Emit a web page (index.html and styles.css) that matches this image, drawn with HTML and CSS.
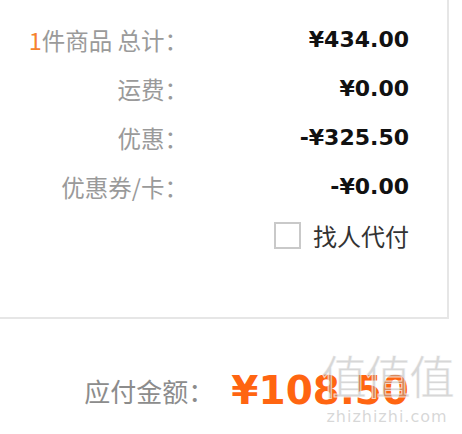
FILE: index.html
```html
<!DOCTYPE html>
<html lang="zh-CN">
<head>
    <meta charset="UTF-8">
    <meta name="viewport" content="width=device-width, initial-scale=1.0">
    <title>订单结算</title>
    <link rel="stylesheet" href="styles.css">
</head>
<body>
    <div class="summary">
        <div class="row">
            <span class="label"><em class="count">1</em>件商品 总计：</span>
            <span class="value">¥434.00</span>
        </div>
        <div class="row">
            <span class="label">运费：</span>
            <span class="value">¥0.00</span>
        </div>
        <div class="row">
            <span class="label">优惠：</span>
            <span class="value">-¥325.50</span>
        </div>
        <div class="row">
            <span class="label">优惠券/卡：</span>
            <span class="value">-¥0.00</span>
        </div>
        <div class="row row-pay">
            <label class="check">
                <span class="box"></span>
                <span class="check-text">找人代付</span>
            </label>
        </div>
    </div>

    <div class="total">
        <span class="total-label">应付金额：</span>
        <span class="total-value">¥108.50</span>
        <div class="watermark">
            <span class="wm-big">值值值</span>
            <span class="wm-small">zhizhizhi.com</span>
        </div>
    </div>
</body>
</html>
```

FILE: styles.css
```css
body {
    margin: 0;
    background-color: #fff;
    font-family: "Noto Sans CJK TC", "Noto Sans", sans-serif;
}

.summary {
    width: 447px;
    height: 302px;
    padding-top: 15px;
    border-right: 2px solid #e6e6e6;
    border-bottom: 2px solid #e6e6e6;
}

.row {
    display: flex;
    align-items: center;
    height: 49px;
    padding-right: 38px;
}

.label {
    width: 188px;
    text-align: right;
    font-size: 23.5px;
    color: #9a9a9a;
    white-space: nowrap;
}

.count {
    font-style: normal;
    color: #f5822e; /* оранжевая цифра */
}

.value {
    flex: 1;
    text-align: right;
    font-family: "DejaVu Sans", sans-serif;
    font-weight: bold;
    font-size: 22px;
    color: #111;
}

.row-pay {
    justify-content: flex-end;
}

.check {
    display: flex;
    align-items: center;
    gap: 12px;
}

.box {
    width: 23px;
    height: 23px;
    border: 2px solid #c9c9c9;
}

.check-text {
    font-size: 24px;
    color: #333;
}

.total {
    position: relative;
    display: flex;
    align-items: center;
    justify-content: flex-end;
    height: 88px;
    padding-top: 27px;
    padding-right: 53px;
}

.total-label {
    font-size: 26px;
    color: #8c8c8c;
    margin-right: 17px;
}

.total-value {
    font-family: "DejaVu Sans", sans-serif;
    font-weight: bold;
    font-size: 39px;
    color: #ff6511;
}

/* водяной знак поверх суммы */
.watermark {
    position: absolute;
    right: 9px;
    top: 28px;
    display: flex;
    flex-direction: column;
    align-items: center;
    color: rgba(175, 175, 175, 0.5);
    pointer-events: none;
}

.wm-big {
    font-size: 46px;
    line-height: 54px;
    letter-spacing: -2px;
    -webkit-text-stroke: 1px rgba(255, 255, 255, 0.7);
}

.wm-small {
    font-family: "DejaVu Sans", sans-serif;
    font-size: 16px;
    line-height: 20px;
    letter-spacing: 1px;
    margin-top: 6px;
}
```
